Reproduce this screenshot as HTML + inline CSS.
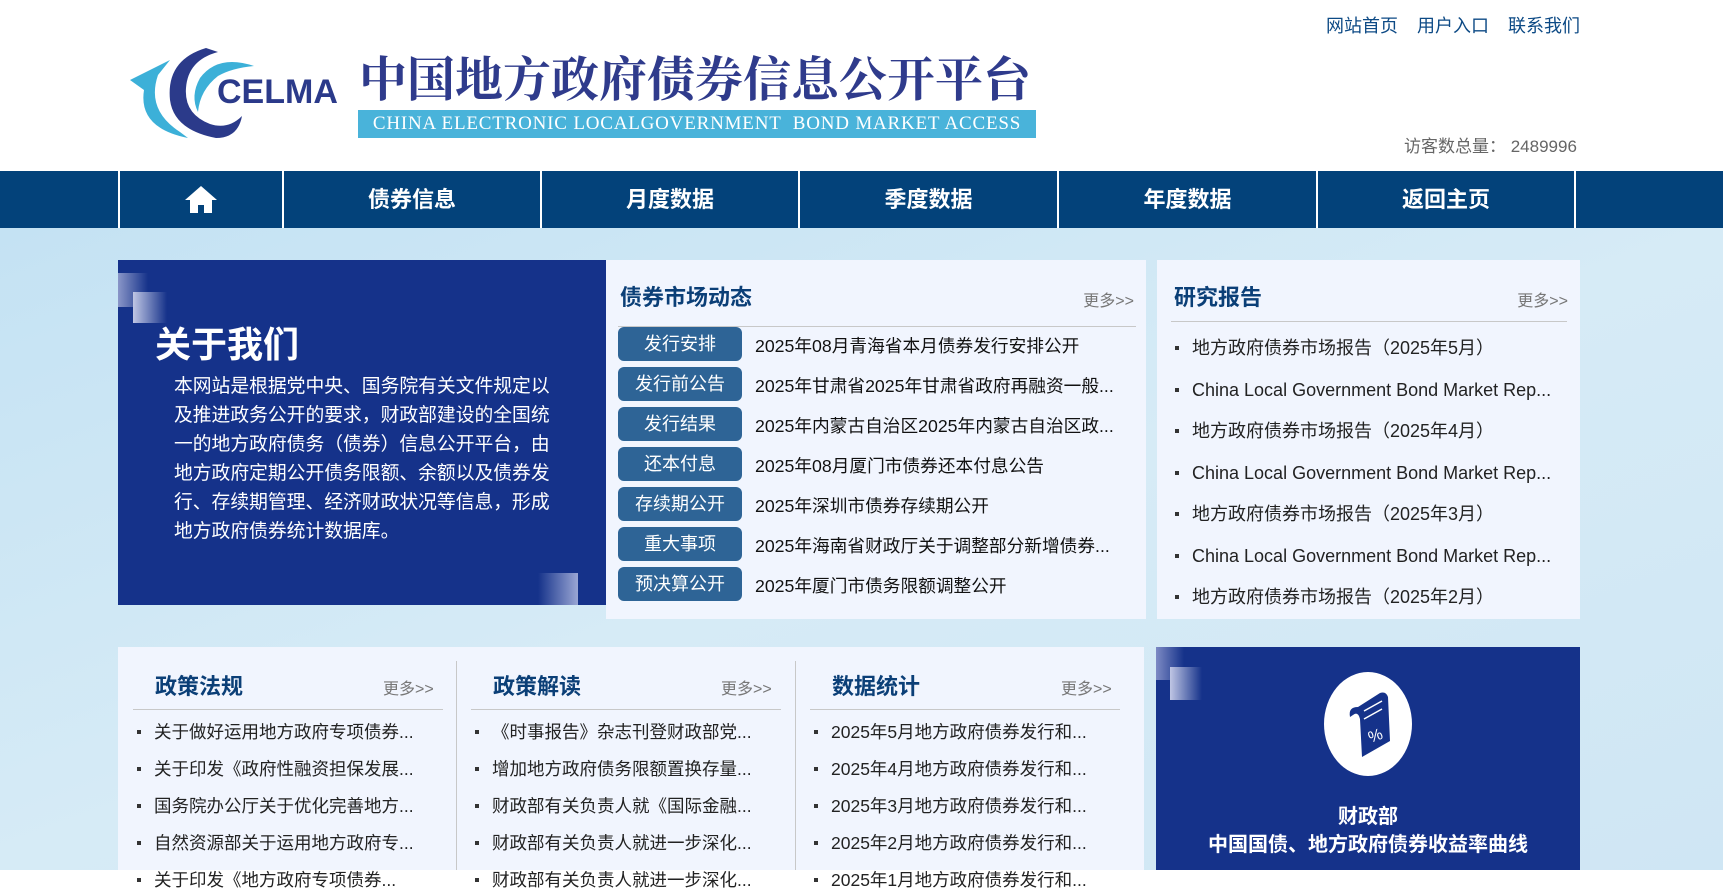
<!DOCTYPE html>
<html><head><meta charset="utf-8"><style>
*{margin:0;padding:0;box-sizing:border-box}
body{width:1723px;height:870px;overflow:hidden;background:#fff;font-family:"Liberation Sans","Noto Sans CJK SC",sans-serif;position:relative}
.a{position:absolute}
.bg{left:0;top:228px;width:1723px;height:642px;background:linear-gradient(160deg,#c4e2f3 0%,#d6ebf6 50%,#cfe6f4 100%)}
.nav{left:0;top:171px;width:1723px;height:57px;background:#03427a}
.nav div{position:absolute;top:0;height:57px;border-left:2px solid #fff;color:#fff;font-weight:bold;font-size:22px;line-height:57px;text-align:center}
.toplinks{top:12px;left:1326px;font-size:18px;color:#0d4a85;word-spacing:0}
.toplinks span{margin-right:19px}
.panel{background:#f1f5fe}
.h{font-size:22px;font-weight:bold;color:#0b3f77}
.more{font-size:16px;color:#777}
.btn{position:absolute;left:12px;width:124px;height:34px;background:#2e6496;border-radius:6px;color:#fff;font-size:18px;text-align:center;line-height:34px}
.nt{position:absolute;left:149px;font-size:17.7px;color:#111;white-space:nowrap;line-height:34px}
.li{position:absolute;font-size:18px;color:#222;white-space:nowrap;line-height:24px}
.li:before{content:"";position:absolute;left:-17px;top:10px;width:4px;height:4px;background:#333}
.b .li{font-size:17.5px}
</style></head><body>
<div class="a bg"></div>
<div class="a toplinks"><span>网站首页</span><span>用户入口</span><span style="margin:0">联系我们</span></div>
<div class="a" style="left:1404px;top:132px;font-size:17px;color:#666">访客数总量： 2489996</div>
<svg class="a" style="left:118px;top:30px" width="230" height="120" viewBox="0 0 230 120">
<path d="M12 50 L52 30 L40 45 Q28 80 62 102 L70 108 Q20 98 26 60 Z" fill="#3cb0d8"/>
<path d="M88 18 Q48 30 52 70 Q56 100 98 108 Q120 108 124 86 Q110 100 92 94 Q66 84 68 58 Q70 30 100 22 Z" fill="#2b3a8a"/>
<path d="M136 36 Q100 24 82 48 Q72 66 80 82 Q82 60 100 46 Q114 38 136 36 Z" fill="#3cb0d8"/>
<text x="99" y="73" font-family="Liberation Sans" font-weight="bold" font-size="34" fill="#2b3a8a">CELMA</text>
</svg>
<div class="a" style="left:359px;top:46px;font-size:48px;line-height:60px;color:#2f3b8c;font-family:'Noto Serif CJK SC','Liberation Serif',serif;font-weight:bold;white-space:nowrap">中国地方政府债券信息公开平台</div>
<div class="a" style="left:358px;top:110px;width:678px;height:28px;background:#49b3da;color:#fff;font-family:'Liberation Serif',serif;font-size:19px;letter-spacing:0.8px;line-height:28px;text-align:center;white-space:nowrap">CHINA ELECTRONIC LOCALGOVERNMENT&nbsp; BOND MARKET ACCESS</div>
<div class="a nav">
<div style="left:118px;width:164px"><svg width="34" height="30" viewBox="0 0 34 30" style="vertical-align:middle;margin-top:-4px"><path d="M17 2 L33 16 L28 16 L28 29 L20 29 L20 21 L14 21 L14 29 L6 29 L6 16 L1 16 Z" fill="#fff"/></svg></div>
<div style="left:282px;width:258px">债券信息</div>
<div style="left:540px;width:258px">月度数据</div>
<div style="left:798px;width:259px">季度数据</div>
<div style="left:1057px;width:259px">年度数据</div>
<div style="left:1316px;width:258px">返回主页</div>
<div style="left:1574px;width:2px"></div>
</div>
<!-- about -->
<div class="a" style="left:118px;top:260px;width:488px;height:345px;background:#15328a;overflow:hidden">
<div class="a" style="left:0;top:13px;width:30px;height:34px;background:linear-gradient(90deg,#8a96c8,#15328a)"></div>
<div class="a" style="left:15px;top:32px;width:34px;height:31px;background:linear-gradient(90deg,#c0c6e4,#15328a)"></div>
<div class="a" style="left:420px;top:313px;width:40px;height:32px;background:linear-gradient(90deg,#15328a,#9aa6d4)"></div>
<div class="a" style="left:37px;top:56px;font-size:36px;font-weight:bold;color:#fff">关于我们</div>
<div class="a" style="left:56px;top:111px;width:382px;font-size:18.8px;line-height:29px;color:#fff">本网站是根据党中央、国务院有关文件规定以及推进政务公开的要求，财政部建设的全国统一的地方政府债务（债券）信息公开平台，由地方政府定期公开债务限额、余额以及债券发行、存续期管理、经济财政状况等信息，形成地方政府债券统计数据库。</div>
</div>
<!-- news -->
<div class="a panel" style="left:606px;top:260px;width:540px;height:359px">
<div class="a h" style="left:14px;top:20px">债券市场动态</div>
<div class="a more" style="right:12px;top:27px">更多&gt;&gt;</div>
<div class="a" style="left:12px;top:66px;width:518px;height:1px;background:#c8c8c8"></div>
<div class="btn" style="top:67px">发行安排</div><div class="nt" style="top:69px">2025年08月青海省本月债券发行安排公开</div>
<div class="btn" style="top:107px">发行前公告</div><div class="nt" style="top:109px">2025年甘肃省2025年甘肃省政府再融资一般...</div>
<div class="btn" style="top:147px">发行结果</div><div class="nt" style="top:149px">2025年内蒙古自治区2025年内蒙古自治区政...</div>
<div class="btn" style="top:187px">还本付息</div><div class="nt" style="top:189px">2025年08月厦门市债券还本付息公告</div>
<div class="btn" style="top:227px">存续期公开</div><div class="nt" style="top:229px">2025年深圳市债券存续期公开</div>
<div class="btn" style="top:267px">重大事项</div><div class="nt" style="top:269px">2025年海南省财政厅关于调整部分新增债券...</div>
<div class="btn" style="top:307px">预决算公开</div><div class="nt" style="top:309px">2025年厦门市债务限额调整公开</div>
</div>
<!-- research -->
<div class="a panel" style="left:1157px;top:260px;width:423px;height:359px">
<div class="a h" style="left:17px;top:20px">研究报告</div>
<div class="a more" style="right:12px;top:27px">更多&gt;&gt;</div>
<div class="a" style="left:14px;top:61px;width:396px;height:1px;background:#c8c8c8"></div>
<div class="li" style="left:35px;top:76px">地方政府债券市场报告（2025年5月）</div>
<div class="li" style="left:35px;top:118px">China Local Government Bond Market Rep...</div>
<div class="li" style="left:35px;top:159px">地方政府债券市场报告（2025年4月）</div>
<div class="li" style="left:35px;top:201px">China Local Government Bond Market Rep...</div>
<div class="li" style="left:35px;top:242px">地方政府债券市场报告（2025年3月）</div>
<div class="li" style="left:35px;top:284px">China Local Government Bond Market Rep...</div>
<div class="li" style="left:35px;top:325px">地方政府债券市场报告（2025年2月）</div>
</div>
<!-- bottom -->
<div class="a panel b" style="left:118px;top:647px;width:1026px;height:223px">
<div class="a" style="left:338px;top:14px;width:1px;height:209px;background:#c8c8c8"></div>
<div class="a" style="left:677px;top:14px;width:1px;height:209px;background:#c8c8c8"></div>

<div class="a h" style="left:37px;top:22px">政策法规</div>
<div class="a more" style="left:265px;top:28px">更多&gt;&gt;</div>
<div class="a" style="left:15px;top:62px;width:310px;height:1px;background:#c8c8c8"></div>
<div class="li" style="left:36px;top:73px">关于做好运用地方政府专项债券...</div>
<div class="li" style="left:36px;top:110px">关于印发《政府性融资担保发展...</div>
<div class="li" style="left:36px;top:147px">国务院办公厅关于优化完善地方...</div>
<div class="li" style="left:36px;top:184px">自然资源部关于运用地方政府专...</div>
<div class="li" style="left:36px;top:221px">关于印发《地方政府专项债券...</div>

<div class="a h" style="left:375px;top:22px">政策解读</div>
<div class="a more" style="left:603px;top:28px">更多&gt;&gt;</div>
<div class="a" style="left:353px;top:62px;width:310px;height:1px;background:#c8c8c8"></div>
<div class="li" style="left:374px;top:73px">《时事报告》杂志刊登财政部党...</div>
<div class="li" style="left:374px;top:110px">增加地方政府债务限额置换存量...</div>
<div class="li" style="left:374px;top:147px">财政部有关负责人就《国际金融...</div>
<div class="li" style="left:374px;top:184px">财政部有关负责人就进一步深化...</div>
<div class="li" style="left:374px;top:221px">财政部有关负责人就进一步深化...</div>

<div class="a h" style="left:714px;top:22px">数据统计</div>
<div class="a more" style="left:943px;top:28px">更多&gt;&gt;</div>
<div class="a" style="left:692px;top:62px;width:310px;height:1px;background:#c8c8c8"></div>
<div class="li" style="left:713px;top:73px">2025年5月地方政府债券发行和...</div>
<div class="li" style="left:713px;top:110px">2025年4月地方政府债券发行和...</div>
<div class="li" style="left:713px;top:147px">2025年3月地方政府债券发行和...</div>
<div class="li" style="left:713px;top:184px">2025年2月地方政府债券发行和...</div>
<div class="li" style="left:713px;top:221px">2025年1月地方政府债券发行和...</div>
</div>
<!-- yield curve -->
<div class="a" style="left:1156px;top:647px;width:424px;height:223px;background:#15328a;overflow:hidden">
<div class="a" style="left:0;top:0;width:28px;height:33px;background:linear-gradient(90deg,#7d8ac4,#15328a)"></div>
<div class="a" style="left:14px;top:20px;width:32px;height:33px;background:linear-gradient(90deg,#c0c6e4,#15328a)"></div>
<svg class="a" style="left:164px;top:24px" width="96" height="106" viewBox="0 0 96 106">
<ellipse cx="48" cy="53" rx="44" ry="52" fill="#fff"/>
<path d="M30 46 Q28 36 38 36 L60 22 Q66 20 68 26 L70 70 L42 86 L40 48 Q38 40 33 44 Z" fill="#15328a"/>
<path d="M44 40 L62 30 M44 48 L62 38" stroke="#fff" stroke-width="1.5"/>
<text x="48" y="70" font-family="Liberation Sans" font-size="16" fill="#fff" transform="rotate(-20 55 64)">%</text>
</svg>
<div class="a" style="left:0;width:424px;top:156px;text-align:center;color:#fff;font-size:20px;font-weight:bold;line-height:28px">财政部<br>中国国债、地方政府债券收益率曲线</div>
</div>
</body></html>
